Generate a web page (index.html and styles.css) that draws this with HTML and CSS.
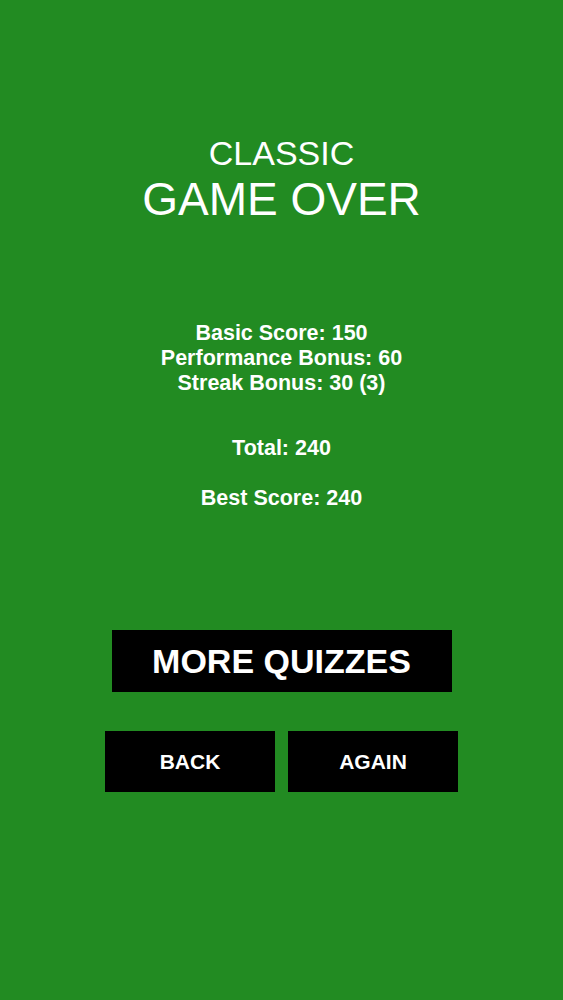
FILE: index.html
```html
<!DOCTYPE html>
<html>
<head>
<meta charset="utf-8">
<link rel="stylesheet" href="styles.css">
</head>
<body>
<main class="screen">
  <header class="title">
    <div class="mode">CLASSIC</div>
    <div class="over">GAME OVER</div>
  </header>
  <section class="scores">
    <div class="group">
      <div class="line">Basic Score: 150</div>
      <div class="line">Performance Bonus: 60</div>
      <div class="line">Streak Bonus: 30 (3)</div>
    </div>
    <div class="line total">Total: 240</div>
    <div class="line best">Best Score: 240</div>
  </section>
  <section class="actions">
    <div class="btn big">MORE QUIZZES</div>
    <div class="row">
      <div class="btn small">BACK</div>
      <div class="btn small">AGAIN</div>
    </div>
  </section>
</main>
</body>
</html>
```
FILE: styles.css
```css
html, body {
  margin: 0;
  padding: 0;
}
body {
  background: #228b22;
  font-family: "Liberation Sans", Arial, sans-serif;
  color: #fff;
}
.screen {
  width: 563px;
  height: 1000px;
  box-sizing: border-box;
  padding-top: 136px;
  display: flex;
  flex-direction: column;
  align-items: center;
}
.title {
  text-align: center;
}
.mode {
  font-size: 34px;
  line-height: 35px;
}
.over {
  margin-top: 5px;
  font-size: 46px;
  line-height: 46px;
}
.scores {
  margin-top: 99px;
  text-align: center;
  font-weight: bold;
  font-size: 21.5px;
}
.line {
  line-height: 25px;
}
.total {
  margin-top: 40px;
}
.best {
  margin-top: 25px;
}
.actions {
  margin-top: 119px;
  display: flex;
  flex-direction: column;
  align-items: center;
}
.btn {
  background: #000;
  color: #fff;
  font-weight: bold;
  display: flex;
  align-items: center;
  justify-content: center;
}
.big {
  width: 340px;
  height: 62px;
  font-size: 34px;
}
.row {
  margin-top: 39px;
  display: flex;
  gap: 13px;
}
.small {
  width: 170px;
  height: 61px;
  font-size: 21px;
}
```
